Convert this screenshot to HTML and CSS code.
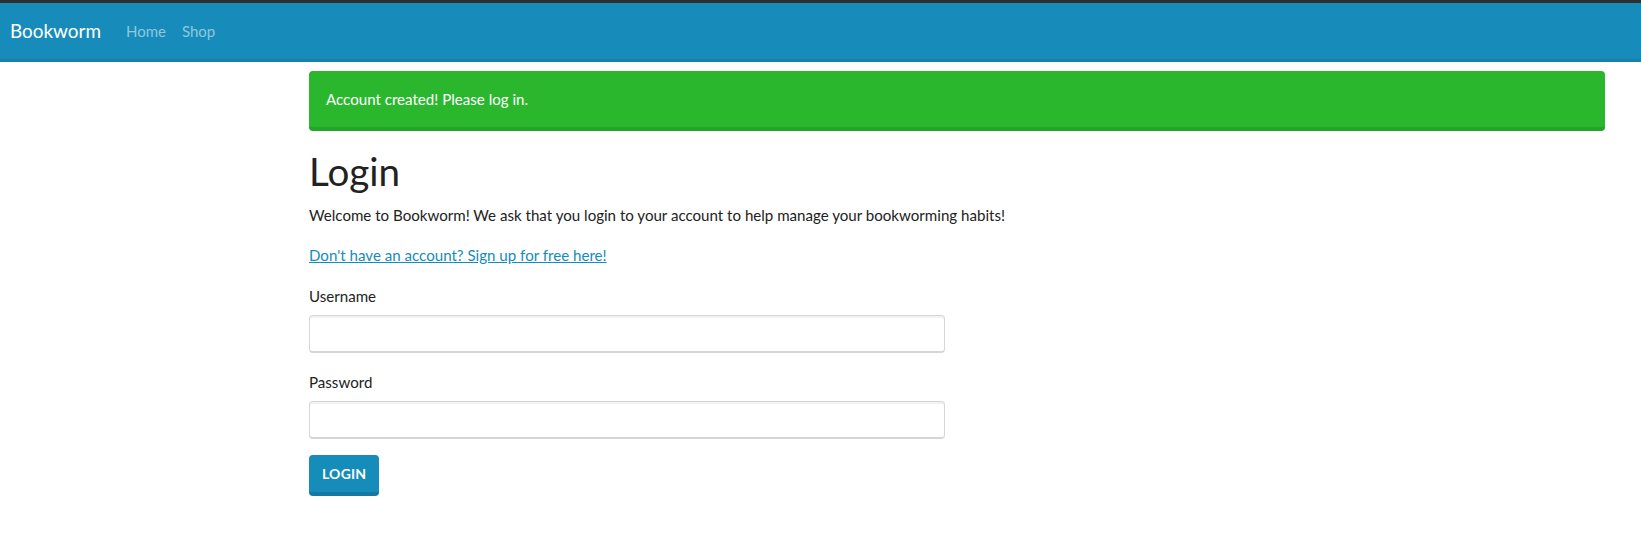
FILE: index.html
```html
<!DOCTYPE html>
<html lang="en">
<head>
<meta charset="utf-8">
<title>Bookworm - Login</title>
<link rel="stylesheet" href="styles.css">
</head>
<body>
<div class="topline"></div>
<nav class="navbar">
  <a class="brand" href="#">Bookworm</a>
  <ul class="nav">
    <li><a href="#">Home</a></li>
    <li><a href="#">Shop</a></li>
  </ul>
</nav>
<main class="container">
  <div class="alert">Account created! Please log in.</div>
  <h1 class="title">Login</h1>
  <p class="intro">Welcome to Bookworm! We ask that you login to your account to help manage your bookworming habits!</p>
  <p class="signup"><a href="#">Don't have an account? Sign up for free here!</a></p>
  <form class="login-form">
    <div class="form-group">
      <label for="username">Username</label>
      <input id="username" class="form-control" type="text">
    </div>
    <div class="form-group">
      <label for="password">Password</label>
      <input id="password" class="form-control" type="password">
    </div>
    <button type="button" class="btn">Login</button>
  </form>
</main>
</body>
</html>
```
FILE: styles.css
```css
html, body {
  margin: 0;
  padding: 0;
}
body {
  font-family: "Lato", "Liberation Sans", sans-serif;
  font-size: 15.1px;
  line-height: 22px;
  color: #222222;
  background: #ffffff;
}
.topline {
  height: 3px;
  background: #2e2f30;
}
.navbar {
  display: flex;
  align-items: center;
  height: 56px;
  background: #178cba;
  border-bottom: 3px solid #1581ac;
  padding: 0 10px;
}
.brand {
  font-size: 18.9px;
  color: #ffffff;
  text-decoration: none;
  margin-right: 17px;
}
.nav {
  display: flex;
  list-style: none;
  margin: 0;
  padding: 0;
}
.nav a {
  display: block;
  padding: 0 8px;
  font-size: 15px;
  color: #8fc7de;
  text-decoration: none;
}
.container {
  margin: 0 36px 0 309px;
}
.alert {
  margin-top: 9px;
  background: #2ab72e;
  border-bottom: 4px solid #24a428;
  border-radius: 4px;
  color: #ffffff;
  padding: 17px 17px;
}
.title {
  margin: 19px 0 11px;
  font-size: 38.6px;
  line-height: 43px;
  font-weight: 400;
  color: #222222;
}
.intro {
  margin: 0 0 18px;
}
.signup {
  margin: 0 0 19px;
}
.signup a {
  color: #158cba;
  text-decoration: underline;
}
.form-group {
  margin-bottom: 18px;
}
.form-group label {
  display: block;
  margin-bottom: 8px;
}
.form-control {
  display: block;
  box-sizing: border-box;
  width: 636px;
  height: 38px;
  margin: 0;
  padding: 6px 12px;
  border: 1px solid #d6d6d9;
  border-bottom-width: 2px;
  border-radius: 4px;
  box-shadow: inset 0 2px 0 rgba(0, 0, 0, 0.05);
  font: inherit;
}
.btn {
  display: block;
  margin-top: -2px;
  padding: 10px 13px;
  border: 0;
  border-bottom: 4px solid #1379a3;
  border-radius: 4px;
  background: #168cba;
  color: #ffffff;
  font-family: "Lato", "Liberation Sans", sans-serif;
  font-size: 14px;
  font-weight: 700;
  line-height: 17px;
  text-transform: uppercase;
  letter-spacing: 0.2px;
}
```
